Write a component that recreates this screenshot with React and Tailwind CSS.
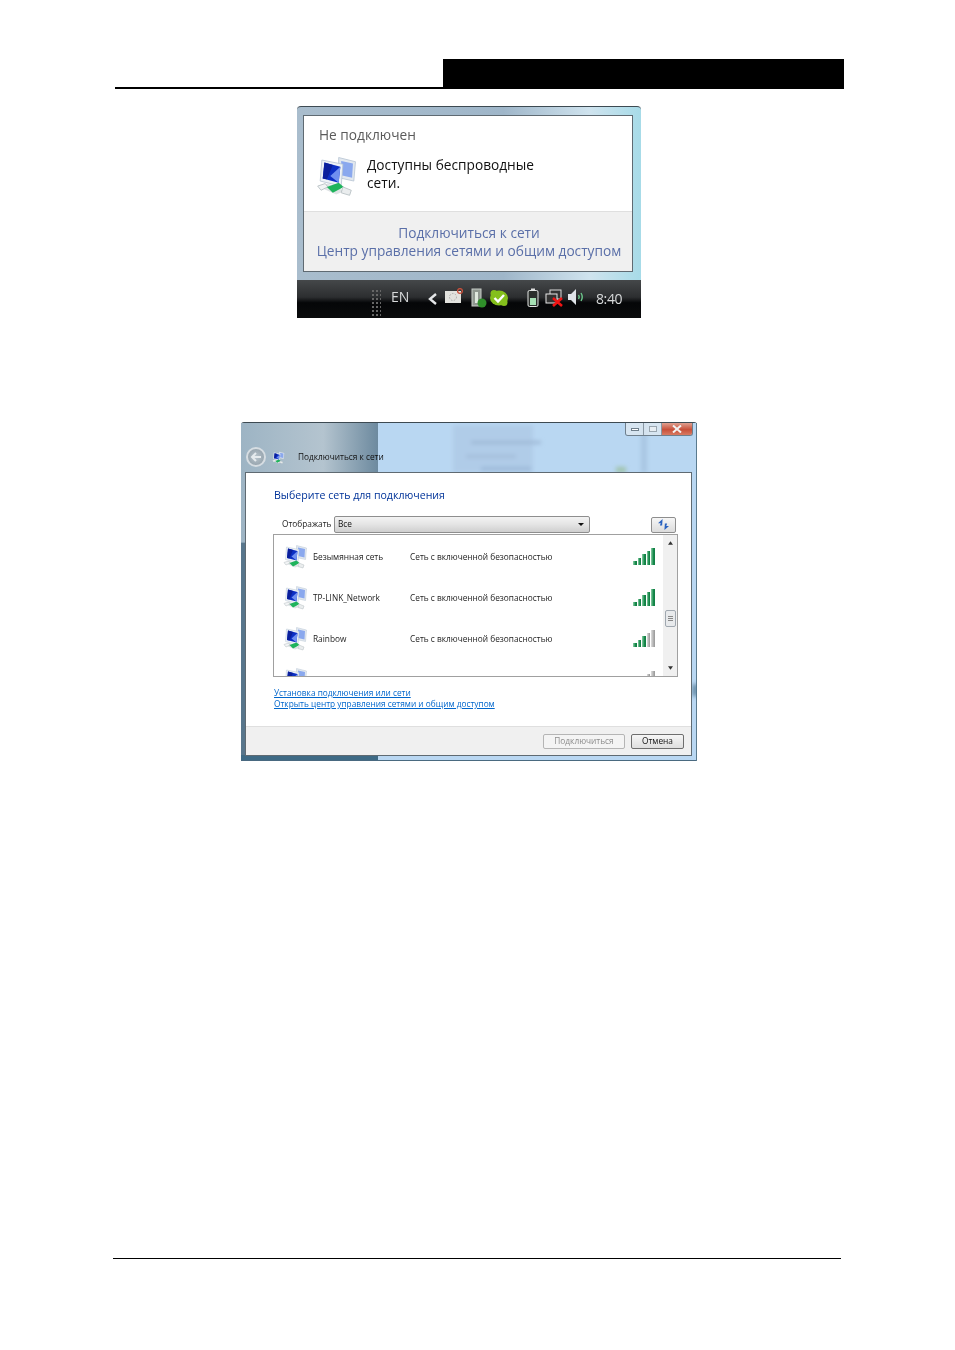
import React from "react";

const NetworkIcon = ({ className }) => (
  <svg viewBox="0 0 50 50" className={className}>
    <path d="M27 3 L47 8 L45 31 L27 27 Z" fill="#e2e8ef" stroke="#b9c6d4" />
    <path d="M30 7 L44 10 L43 27 L30 24 Z" fill="#8aa8ee" />
    <path d="M7 6 L32 11 L30 37 L5 31 Z" fill="#eef2f6" stroke="#b9c6d4" />
    <path d="M10 9 L29 14 L27 33 L8 28 Z" fill="#0c2fc4" />
    <path d="M10 9 L20 12 L13 29 L8 28 Z" fill="#0a1f9c" />
    <path d="M17 25 L29 14 L27 33 Z" fill="#6f8ff0" />
    <path d="M4 38 L14 34 L34 43 L24 47 Z" fill="#dfe3e5" />
    <path d="M2 37 L11 34 L14 38 L6 42 Z" fill="#f2f4f5" stroke="#b4bdc1" />
    <path d="M13 38 L27 33 L33 38 L20 45 Z" fill="#1fb45c" />
    <path d="M32 38 L42 42 L40 48 L30 45 Z" fill="#eaedee" stroke="#b4bdc1" />
  </svg>
);

const Signal = ({ lit }) => {
  const heights = [4, 7, 11, 14, 17];
  return (
    <div className="flex items-end gap-px h-[18px]">
      {heights.map((h, i) => (
        <div
          key={i}
          className={`w-[3.6px] ${
            i < lit
              ? "bg-[linear-gradient(90deg,#8ed0a8,#178a4c_60%,#0f7a40)]"
              : "bg-[linear-gradient(90deg,#dedede,#b0b0b0_60%,#979797)]"
          }`}
          style={{ height: h }}
        />
      ))}
    </div>
  );
};

const rows = [
  { name: "Безымянная сеть", lit: 5 },
  { name: "TP-LINK_Network", lit: 5 },
  { name: "Rainbow", lit: 3 },
];

const Tray = () => (
  <div className="h-[38px] bg-[linear-gradient(180deg,#45484a,#2c2e30_45%,#050608_60%,#0a0b0c)] flex items-center text-[#d8dadb] font-['Open_Sans',sans-serif] blur-[0.4px]">
    <div className="ml-[74px] w-[10px] h-[28px] mt-[8px] bg-[radial-gradient(#666_1px,transparent_1.2px)] bg-[length:4px_4px]"></div>
    <span className="ml-[10px] text-[14px] w-[22px] mt-[-6px]">EN</span>
    <svg viewBox="0 0 10 12" className="ml-[15px] w-[10px] h-[12px]">
      <path d="M8 1 L2 6 L8 11" fill="none" stroke="#e4e6e8" strokeWidth="2.4" />
    </svg>
    <svg viewBox="0 0 18 16" className="ml-[7px] w-[18px] h-[16px] mt-[-7px]">
      <rect x="0" y="3" width="16" height="12" fill="#e2e2de" />
      <circle cx="8" cy="9" r="3.5" fill="none" stroke="#aaa" strokeDasharray="1.5 1.5" />
      <circle cx="15" cy="3" r="2.4" fill="none" stroke="#c9503c" strokeWidth="1.3" />
    </svg>
    <svg viewBox="0 0 16 20" className="ml-[8px] w-[16px] h-[20px] mt-[-2px]">
      <rect x="1" y="1" width="9" height="17" fill="#8f9790" stroke="#c8cdc8" />
      <rect x="4" y="4" width="3" height="11" fill="#dfe8df" />
      <circle cx="11" cy="15" r="4.5" fill="#2f8f2a" />
    </svg>
    <svg viewBox="0 0 20 18" className="ml-[2px] w-[20px] h-[18px] mt-[-2px]">
      <ellipse cx="10" cy="9" rx="9" ry="7.5" fill="#84bf1c" />
      <circle cx="5" cy="4.5" r="3.5" fill="#84bf1c" />
      <circle cx="15" cy="13.5" r="3.5" fill="#84bf1c" />
      <path d="M5.5 9 L9 12.5 L15 6" fill="none" stroke="#fff" strokeWidth="2.4" />
    </svg>
    <svg viewBox="0 0 12 20" className="ml-[18px] w-[12px] h-[20px] mt-[-2px]">
      <rect x="4" y="0.5" width="4" height="2" fill="#ddd" />
      <rect x="1" y="2.5" width="10" height="16" rx="1.5" fill="#2b2f2c" stroke="#e4e6e4" />
      <rect x="3" y="10" width="6" height="7" fill="#a6e0b4" />
    </svg>
    <svg viewBox="0 0 18 18" className="ml-[6px] w-[18px] h-[18px] mt-[-2px]">
      <rect x="5" y="1" width="11" height="9" fill="#333" stroke="#dcdcdc" />
      <rect x="1" y="5" width="11" height="9" fill="#333" stroke="#e8e8e8" />
      <path d="M8 9 L17 17 M17 9 L8 17" stroke="#f01414" strokeWidth="2.6" />
    </svg>
    <svg viewBox="0 0 18 18" className="ml-[4px] w-[18px] h-[18px] mt-[-4px]">
      <path d="M1 6 H4 L9 1 V17 L4 12 H1 Z" fill="#dfe3e8" />
      <path d="M11.5 7 Q13 9 11.5 11 M14 5 Q16.5 9 14 13" fill="none" stroke="#6cc98c" strokeWidth="1.4" />
    </svg>
    <span className="ml-[11px] text-[14px] tracking-[-0.4px] mt-[-2px]">8:40</span>
  </div>
);

const Popup = () => (
  <div className="mt-[17px] ml-[297px] w-[344px] h-[212px] bg-black flex flex-col">
    <div className="h-[174px] bg-[#f7f9fb]">
      <div className="h-[174px] rounded-t-[4px] bg-[linear-gradient(90deg,#a9bdcd,#9fb6c9_60%,#cfe3ee_85%,#a7dbe8)] pt-[8px] pl-[6px] pr-[8px] border-t border-[#3d4a52]">
        <div className="h-[157px] border border-[#5f6a72] bg-white flex flex-col font-['Open_Sans',sans-serif] blur-[0.35px]">
          <div className="h-[95px] px-[15px] pt-[10px]">
            <div className="text-[13.7px] leading-[18px] text-[#5a5a5a]">Не подключен</div>
            <div className="flex mt-[11px]">
              <NetworkIcon className="w-[42px] h-[42px] ml-[-3px] shrink-0" />
              <div className="ml-[9px] mt-[1px] text-[13.7px] leading-[18px] text-[#111]">
                Доступны беспроводные
                <br />
                сети.
              </div>
            </div>
          </div>
          <div className="flex-1 bg-[#f0f0f0] border-t border-[#dfdfdf] flex flex-col items-center pt-[12px] text-[13.7px] leading-[18px] text-[#5a6fa8]">
            <div className="pl-[2px]">Подключиться к сети</div>
            <div className="whitespace-nowrap pl-[2px]">Центр управления сетями и общим доступом</div>
          </div>
        </div>
      </div>
    </div>
    <Tray />
  </div>
);

const GlassBackdrop = () => (
  <svg className="absolute inset-0 w-full h-full" viewBox="0 0 456 339" preserveAspectRatio="none">
    <defs>
      <linearGradient id="lft" x1="0" x2="1" y1="0" y2="0">
        <stop offset="0" stopColor="#9db4c4" />
        <stop offset="0.6" stopColor="#b4c4cf" />
        <stop offset="1" stopColor="#6d8a9f" />
      </linearGradient>
      <filter id="soft">
        <feGaussianBlur stdDeviation="2" />
      </filter>
    </defs>
    <rect width="456" height="339" fill="#b9d7f2" />
    <rect width="137" height="339" fill="url(#lft)" />
    <rect x="0" y="120" width="4" height="219" fill="#58768c" />
    <rect x="0" y="333" width="137" height="6" fill="#3e6a85" />
    <rect x="0" y="338" width="456" height="1" fill="#4a6a80" />
    <rect x="455" y="0" width="1" height="339" fill="#5a7a8e" />
    <g filter="url(#soft)">
      <rect x="212" y="2" width="80" height="48" fill="#b0cce8" />
      <rect x="230" y="18" width="70" height="3" fill="#9db7d4" />
      <rect x="225" y="32" width="50" height="3" fill="#a3bcd8" />
      <rect x="240" y="44" width="50" height="4" fill="#9dbad9" />
      <rect x="375" y="44" width="10" height="6" fill="#a0c4ae" />
      <rect x="400" y="0" width="6" height="50" fill="#a8c6e2" />
      <rect x="452" y="262" width="4" height="12" fill="#4e7590" />
    </g>
  </svg>
);

const WindowButtons = () => (
  <div className="flex justify-end pr-[4px] h-[14px]">
    <div className="flex h-[13px] rounded-b-[3px] border border-t-0 border-[#6f7f8c] overflow-hidden w-[68px]">
      <div className="w-[18px] bg-[#dfe8f0]/80 flex items-center justify-center border-r border-[#8a98a4]">
        <div className="w-[8px] h-[3px] bg-white border border-[#6f7f8c]"></div>
      </div>
      <div className="w-[18px] bg-[#dfe8f0]/80 flex items-center justify-center border-r border-[#8a98a4]">
        <div className="w-[8px] h-[6px] bg-[#e8eef3] border border-[#9aa6b0]"></div>
      </div>
      <div className="flex-1 bg-[linear-gradient(180deg,#e0a090,#c8503a_55%,#d87a62)] flex items-center justify-center">
        <svg viewBox="0 0 10 8" className="w-[10px] h-[8px]">
          <path d="M1 0.5 L9 7.5 M9 0.5 L1 7.5" stroke="#f2f2f2" strokeWidth="2" />
        </svg>
      </div>
    </div>
  </div>
);

const TitleBar = () => (
  <div className="relative h-[49px] flex flex-col">
    <WindowButtons />
    <div className="flex items-center ml-[5px] mt-[10px] blur-[0.3px]">
      <div className="w-[20px] h-[20px] rounded-full border-2 border-[#d6dde2] bg-[radial-gradient(circle,#b9c5cd,#8c9aa4)] flex items-center justify-center">
        <svg viewBox="0 0 12 10" className="w-[12px] h-[10px]">
          <path d="M6 1 L2 5 L6 9 M2 5 H11" fill="none" stroke="#e6ebee" strokeWidth="2" />
        </svg>
      </div>
      <NetworkIcon className="w-[13px] h-[13px] ml-[6px]" />
      <span className="ml-[13px] text-[8.3px] text-[#111] font-['Open_Sans',sans-serif]">Подключиться к сети</span>
    </div>
  </div>
);

const NetRow = ({ name, lit, clipped }) => (
  <div className="h-[41px] shrink-0 flex items-center pl-[9px] pb-[1px]">
    <NetworkIcon className="w-[25px] h-[25px]" />
    <div className="ml-[5px] w-[97px] mt-[2px] text-[8.3px] text-[#222]">{name}</div>
    <div className="w-[223px] mt-[2px] text-[8.3px] text-[#222] whitespace-nowrap">
      {clipped ? "" : "Сеть с включенной безопасностью"}
    </div>
    <Signal lit={lit} />
  </div>
);

const NetList = () => (
  <div className="mt-[1px] ml-[27px] mr-[13px] h-[143px] border border-[#a0a0a0] flex">
    <div className="flex-1 pt-[1px] overflow-hidden">
      {rows.map((r) => (
        <NetRow key={r.name} name={r.name} lit={r.lit} />
      ))}
      <NetRow name="" lit={1} clipped />
    </div>
    <div className="w-[14px] bg-[#f0f0f0] flex flex-col items-center text-[#333]">
      <svg viewBox="0 0 6 4" className="w-[5px] h-[4px] mt-[6px]">
        <path d="M3 0 L6 4 H0 Z" fill="#333" />
      </svg>
      <div className="mt-[65px] w-[11px] h-[17px] border border-[#a0a8b0] rounded-[2px] bg-[#e8eaec] flex flex-col items-center justify-center gap-px">
        <div className="w-[5px] h-px bg-[#888]"></div>
        <div className="w-[5px] h-px bg-[#888]"></div>
        <div className="w-[5px] h-px bg-[#888]"></div>
      </div>
      <svg viewBox="0 0 6 4" className="w-[5px] h-[4px] mt-auto mb-[6px]">
        <path d="M0 0 H6 L3 4 Z" fill="#333" />
      </svg>
    </div>
  </div>
);

const ConnectWindow = () => (
  <div className="relative mt-[104px] ml-[241px] w-[456px] h-[339px] border-t border-[#3d4a52] rounded-t-[3px] font-['Open_Sans',sans-serif]">
    <GlassBackdrop />
    <div className="relative h-full flex flex-col">
      <TitleBar />
      <div className="ml-[4px] mr-[5px] h-[284px] border border-[#5f6a72] bg-white flex flex-col">
        <div className="flex-1 blur-[0.3px]">
          <div className="ml-[28px] mt-[13px] text-[10.6px] leading-[18px] text-[#003399]">Выберите сеть для подключения</div>
          <div className="flex items-center mt-[12px] h-[17px]">
            <span className="ml-[36px] w-[52px] text-[8.3px] text-[#222] whitespace-nowrap">Отображать</span>
            <div className="w-[256px] h-[17px] rounded-[2px] border border-[#8e8e8e] bg-[linear-gradient(180deg,#f3f3f3,#e4e4e4_50%,#cfcfcf)] flex items-center justify-between px-[3px]">
              <span className="text-[8.3px] text-[#111]">Все</span>
              <svg viewBox="0 0 8 4" className="w-[6px] h-[3px] mr-[2px]">
                <path d="M0 0 H8 L4 4 Z" fill="#111" />
              </svg>
            </div>
            <div className="ml-[61px] w-[25px] h-[16px] rounded-[2px] border border-[#8e8e8e] bg-[linear-gradient(180deg,#f6f6f6,#dcdcdc)] flex items-center justify-center">
              <svg viewBox="0 0 14 12" className="w-[13px] h-[11px]">
                <path d="M6 0 L1 4.5 H4 L3 7 H5.5 Z" fill="#2a62c0" />
                <path d="M8 12 L13 7.5 H10 L11 5 H8.5 Z" fill="#2a62c0" />
              </svg>
            </div>
          </div>
          <NetList />
          <div className="ml-[28px] mt-[10px] flex flex-col items-start text-[8.3px] leading-[11px] text-[#0066cc] underline">
            <span>Установка подключения или сети</span>
            <span>Открыть центр управления сетями и общим доступом</span>
          </div>
        </div>
        <div className="h-[29px] bg-[#f0f0f0] border-t border-[#dfdfdf] flex items-center justify-end pr-[7px] gap-[6px] text-[8.3px] blur-[0.3px]">
          <div className="w-[82px] h-[15px] border border-[#b5b5b5] rounded-[2px] bg-[#f4f4f4] text-[#8c8c8c] flex items-center justify-center">Подключиться</div>
          <div className="w-[53px] h-[15px] border border-[#6e6e6e] rounded-[2px] bg-[linear-gradient(180deg,#f6f6f6,#dedede)] text-[#111] flex items-center justify-center">Отмена</div>
        </div>
      </div>
    </div>
  </div>
);

export default function App() {
  return (
    <div className="w-[955px] h-[1350px] bg-white flex flex-col overflow-hidden">
      <div className="mt-[59px] ml-[115px] w-[729px] h-[30px] border-b-2 border-black flex justify-end">
        <div className="w-[401px] h-full bg-black"></div>
      </div>
      <Popup />
      <ConnectWindow />
      <div className="mt-[497px] ml-[113px] w-[728px] border-t border-black"></div>
    </div>
  );
}
